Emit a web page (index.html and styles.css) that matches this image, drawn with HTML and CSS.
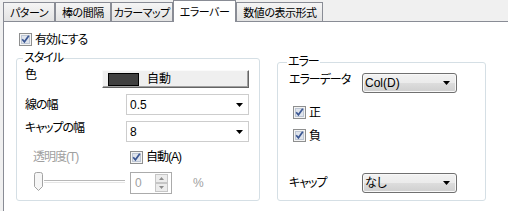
FILE: index.html
```html
<!DOCTYPE html>
<html lang="ja">
<head>
  <meta charset="UTF-8" />
  <title>エラーバー</title>
  <link rel="stylesheet" href="styles.css">
</head>
<body>
  <div class="tabs">
    <div class="tab">パターン</div>
    <div class="tab">棒の間隔</div>
    <div class="tab">カラーマップ</div>
    <div class="tab active">エラーバー</div>
    <div class="tab">数値の表示形式</div>
  </div>

  <div class="panel">
    <label class="check-row enable">
      <svg class="check" width="13" height="13" viewBox="0 0 13 13"><rect x="0.5" y="0.5" width="12" height="12" fill="#f4f4f4" stroke="#8e8f8f"/><rect x="2.5" y="2.5" width="8" height="8" fill="#dfe4ec" stroke="#bcc5d3"/><path d="M3.2 6.2 L5.4 8.8 L9.8 2.8" fill="none" stroke="#3b5793" stroke-width="1.7"/></svg>
      有効にする
    </label>

    <div class="groups">
      <fieldset class="group style-group">
        <legend>スタイル</legend>
        <div class="style-grid">
          <span class="lbl top color-lbl">色</span>
          <button class="color-btn"><span class="swatch"></span>自動</button>

          <span class="lbl wide">線の幅</span>
          <div class="combo flat">0.5<svg class="arrow" width="7" height="4"><path d="M0 0h7L3.5 4z"/></svg></div>

          <span class="lbl wide top">キャップの幅</span>
          <div class="combo flat">8<svg class="arrow" width="7" height="4"><path d="M0 0h7L3.5 4z"/></svg></div>

          <span class="lbl wide disabled alpha-lbl">透明度(T)</span>
          <label class="check-row indent">
            <svg class="check" width="13" height="13" viewBox="0 0 13 13"><rect x="0.5" y="0.5" width="12" height="12" fill="#f4f4f4" stroke="#8e8f8f"/><rect x="2.5" y="2.5" width="8" height="8" fill="#dfe4ec" stroke="#bcc5d3"/><path d="M3.2 6.2 L5.4 8.8 L9.8 2.8" fill="none" stroke="#3b5793" stroke-width="1.7"/></svg>
            自動(A)
          </label>

          <div class="slider">
            <svg class="thumb" width="11" height="20" viewBox="0 0 11 20"><path d="M1.5 2.5 Q1.5 0.5 3.5 0.5 H7.5 Q9.5 0.5 9.5 2.5 V14.5 L5.5 18.5 L1.5 14.5 Z" fill="#f6f6f6" stroke="#a3a3a3"/></svg>
            <span class="track"></span>
          </div>
          <div class="spin-row indent">
            <div class="spin">
              <span class="spin-val">0</span>
              <span class="spin-btns">
                <span><svg width="5" height="3"><path d="M0 3h5L2.5 0z"/></svg></span>
                <span><svg width="5" height="3"><path d="M0 0h5L2.5 3z"/></svg></span>
              </span>
            </div>
            <span class="disabled">%</span>
          </div>
        </div>
      </fieldset>

      <fieldset class="group error-group">
        <legend>エラー</legend>
        <div class="error-row first">
          <span class="lbl top">エラーデータ</span>
          <div class="combo raised">Col(D)<svg class="arrow" width="7" height="4"><path d="M0 0h7L3.5 4z"/></svg></div>
        </div>
        <label class="check-row sign plus">
          <svg class="check" width="13" height="13" viewBox="0 0 13 13"><rect x="0.5" y="0.5" width="12" height="12" fill="#f4f4f4" stroke="#8e8f8f"/><rect x="2.5" y="2.5" width="8" height="8" fill="#dfe4ec" stroke="#bcc5d3"/><path d="M3.2 6.2 L5.4 8.8 L9.8 2.8" fill="none" stroke="#3b5793" stroke-width="1.7"/></svg>
          正
        </label>
        <label class="check-row sign minus">
          <svg class="check" width="13" height="13" viewBox="0 0 13 13"><rect x="0.5" y="0.5" width="12" height="12" fill="#f4f4f4" stroke="#8e8f8f"/><rect x="2.5" y="2.5" width="8" height="8" fill="#dfe4ec" stroke="#bcc5d3"/><path d="M3.2 6.2 L5.4 8.8 L9.8 2.8" fill="none" stroke="#3b5793" stroke-width="1.7"/></svg>
          負
        </label>
        <div class="error-row cap">
          <span class="lbl">キャップ</span>
          <div class="combo raised">なし<svg class="arrow" width="7" height="4"><path d="M0 0h7L3.5 4z"/></svg></div>
        </div>
      </fieldset>
    </div>
  </div>
</body>
</html>
```

FILE: styles.css
```css
body {
  margin: 0;
  width: 508px;
  height: 211px;
  overflow: hidden;
  background-color: #f0f0f0;
  color: #000;
  font: 12px/14px "Liberation Sans", "Noto Sans CJK JP", sans-serif;
  font-feature-settings: "palt";
}

.tabs {
  display: flex;
  align-items: flex-end;
  height: 21px;
  padding-left: 3px;
  font-size: 11px;
  letter-spacing: -0.5px;
}

.tab {
  box-sizing: border-box;
  height: 19px;
  padding: 3px 6px 0;
  border: 1px solid #898c95;
  border-bottom: none;
  background: linear-gradient(#f5f5f5, #e3e3e3);
  white-space: nowrap;
  text-align: center;
}

.tab:nth-child(3) {
  padding: 3px 2px 0;
}

.tab.active {
  position: relative;
  z-index: 1;
  height: 22px;
  margin-bottom: -1px;
  padding: 4px 6px 0;
  background: #fff;
}

.panel {
  margin-left: 3px;
  height: 178px;
  padding: 11px 0 0 12px;
  border-top: 1px solid #898c95;
  border-left: 1px solid #898c95;
  background-color: #fff;
}

.check-row {
  display: flex;
  align-items: center;
  gap: 3px;
  height: 13px;
  letter-spacing: -1px;
}

.check {
  flex: none;
}

.enable {
  margin-left: 3px;
}

.groups {
  display: flex;
  align-items: flex-start;
  margin-top: 5px;
}

.group {
  box-sizing: border-box;
  margin: 0;
  border: 1px solid #d5dfe5;
  border-radius: 3px;
  min-inline-size: 0;
}

.group legend {
  margin-left: -2px;
  padding: 0 1px;
  letter-spacing: -1px;
}

.style-group {
  width: 244px;
  height: 150px;
  padding: 0 9px 0 8px;
}

.error-group {
  width: 209px;
  height: 146px;
  margin: 4px 0 0 17px;
  padding: 0 0 0 11px;
}

.style-grid {
  display: grid;
  grid-template-columns: 77px 24px 123px;
  grid-template-rows: 18px 21px 21px 18px 23px;
  row-gap: 6px;
  margin-top: 5px;
}

.lbl {
  align-self: center;
  white-space: nowrap;
  letter-spacing: -1px;
}

.lbl.wide {
  grid-column: 1 / 3;
}

.lbl.top {
  align-self: start;
}

.color-lbl {
  margin-top: -2px;
}

.alpha-lbl {
  margin-left: 8px;
}

.disabled {
  color: #a0a0a0;
}

.indent {
  margin-left: 4px;
  align-self: center;
}

.color-btn {
  grid-column: 2 / 4;
  display: flex;
  align-items: center;
  gap: 8px;
  padding: 0 5px;
  border: 1px solid;
  border-color: #fafafa #646464 #646464 #fafafa;
  box-shadow: inset -1px -1px #a0a0a0;
  background-color: #efefef;
  font: inherit;
  color: #000;
}

.swatch {
  box-sizing: border-box;
  width: 31px;
  height: 13px;
  border: 1px solid #000;
  background-color: #404040;
}

.combo {
  box-sizing: border-box;
  display: flex;
  align-items: center;
  justify-content: space-between;
  white-space: nowrap;
}

.combo.flat {
  padding: 0 5px 0 3px;
  border: 1px solid #cdcdcd;
  background-color: #fff;
}

.combo.raised {
  width: 95px;
  height: 20px;
  padding: 0 6px 0 2px;
  border: 1px solid #707070;
  border-radius: 3px;
  box-shadow: inset 0 0 0 1px #f8f8f8;
  background: linear-gradient(#f2f2f2, #ebebeb 50%, #dddddd 51%, #cfcfcf);
}

.arrow {
  flex: none;
}

.slider {
  grid-column: 1 / 3;
  display: flex;
  align-items: flex-start;
  width: 92px;
  margin-left: 8px;
}

.thumb {
  flex: none;
}

.track {
  flex: 1;
  height: 1px;
  margin-top: 8px;
  border-top: 1px solid #b7b7b7;
  border-bottom: 1px solid #e6e6e6;
}

.spin-row {
  display: flex;
  align-items: center;
  gap: 21px;
  align-self: start;
}

.spin {
  box-sizing: border-box;
  display: flex;
  justify-content: space-between;
  width: 42px;
  height: 22px;
  padding: 1px 3px 1px 4px;
  border: 1px solid #ababab;
  color: #a0a0a0;
}

.spin-val {
  line-height: 18px;
}

.spin-btns {
  display: flex;
  flex-direction: column;
  width: 13px;
}

.spin-btns span {
  flex: 1;
  display: flex;
  align-items: center;
  justify-content: center;
  border: 1px solid #c6c6c6;
  background-color: #ececec;
}

.spin-btns svg {
  fill: #8c8c8c;
}

.error-row {
  display: flex;
  align-items: center;
}

.error-row .lbl {
  width: 73px;
}

.error-row.first {
  align-items: flex-start;
  margin-top: 4px;
}

.sign {
  margin-left: 4px;
}

.sign.plus {
  margin-top: 13px;
}

.sign.minus {
  margin-top: 10px;
}

.error-row.cap {
  margin-top: 31px;
}
```
